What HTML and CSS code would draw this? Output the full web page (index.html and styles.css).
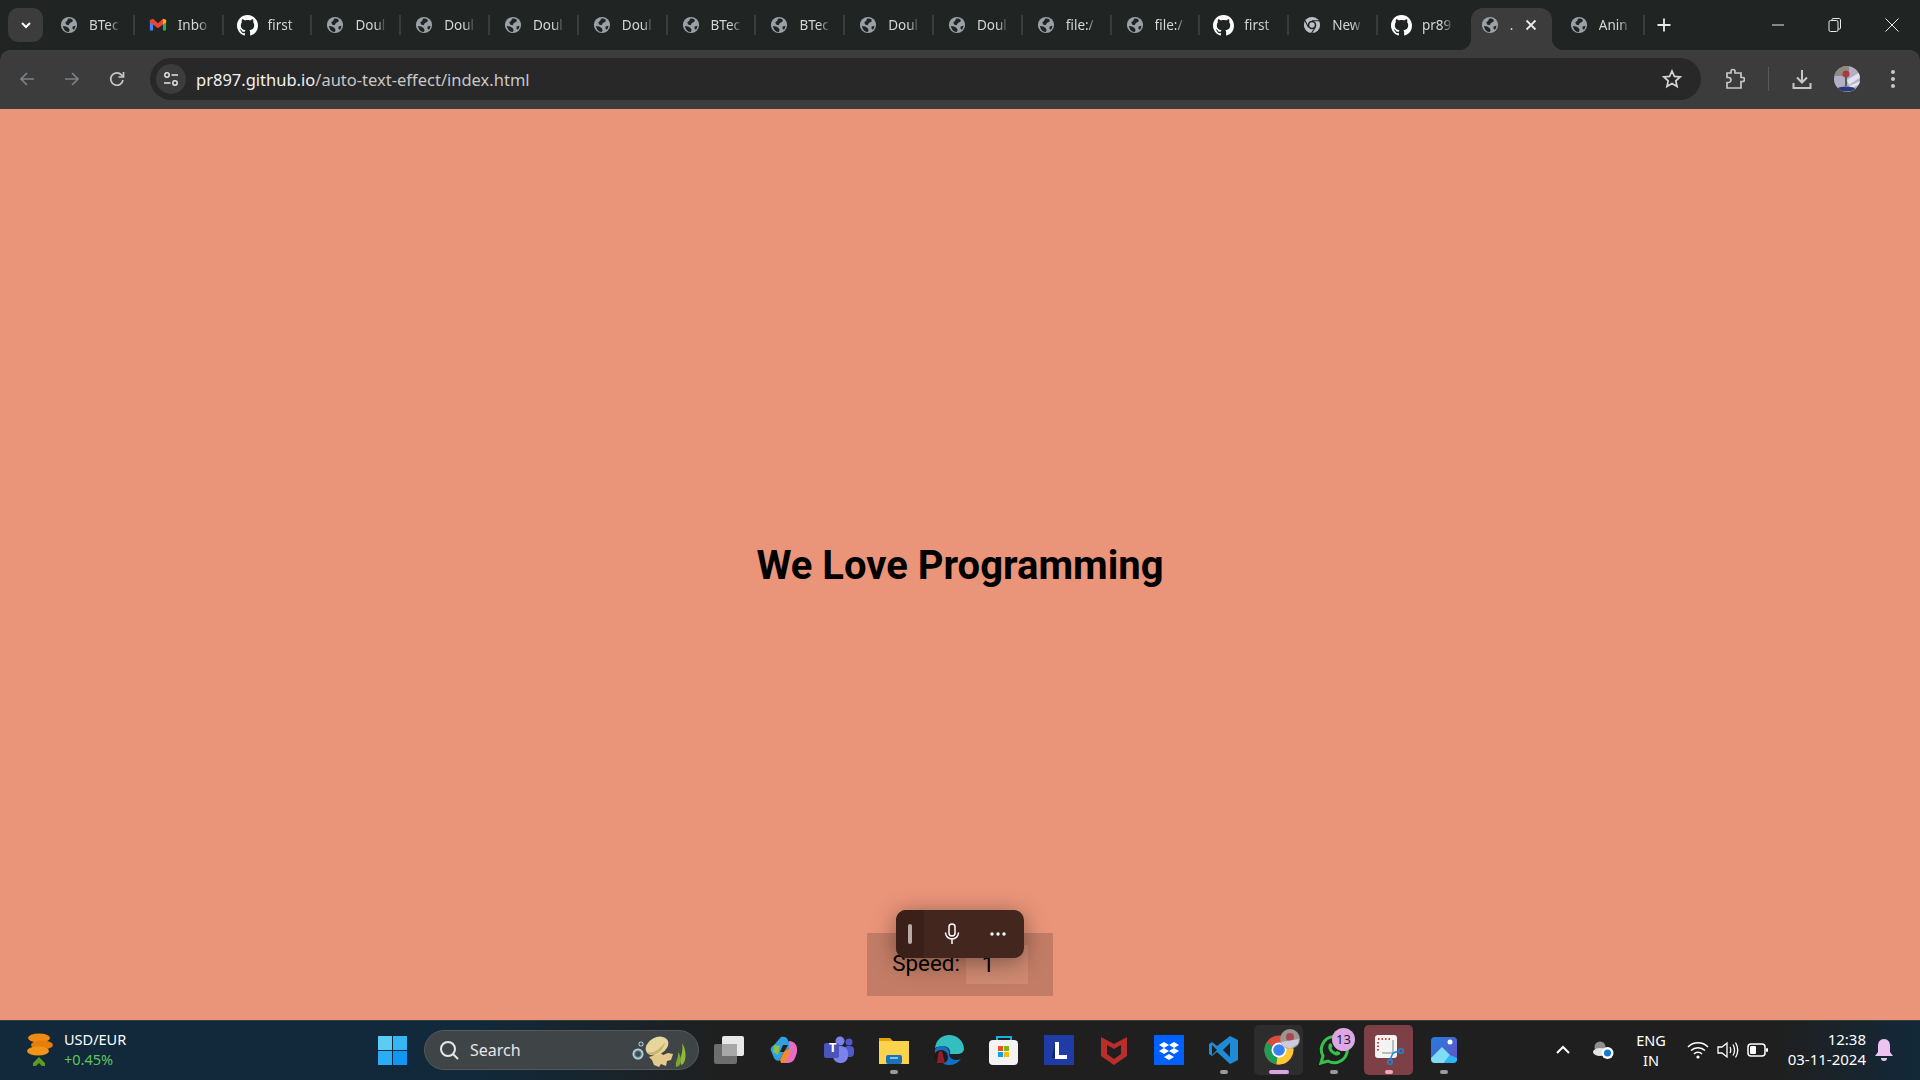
FILE: index.html
```html
<!DOCTYPE html>
<html lang="en">
<head>
  <meta charset="UTF-8" />
  <meta name="viewport" content="width=device-width, initial-scale=1.0"/>
  <title>Auto Text Effect</title>
  <link rel="stylesheet" href="styles.css">
</head>
<body>

  <svg class="defs" width="0" height="0">
    <symbol id="globe" viewBox="0 0 20 20">
      <circle cx="10" cy="10" r="9" fill="#9aa0a6"/>
      <path d="M9 3c2-.3 3.800.2 5.200 1.300l-.4 2.200-2.800 1.300-1.400 2.500-2.800-.9-.9-2.500 1.900-1.400z" fill="#202423"/>
      <path d="M3.200 11.200l3.800.4 2.800 1.900.9 2.400-1 1.900-2.200-.3C5.200 16.500 3.700 14 3.200 11.200z" fill="#202423"/>
      <path d="M14 11.800l3.100-1c0 1.800-.7 3.500-1.800 4.500l-1.500-1.300z" fill="#202423"/>
    </symbol>
    <symbol id="github" viewBox="0 0 16 16">
      <path fill="#fff" d="M8 0C3.580 0 0 3.580 0 8c0 3.540 2.290 6.530 5.470 7.590.4.070.55-.17.55-.38 0-.19-.01-.82-.01-1.490-2.010.37-2.530-.49-2.690-.94-.09-.23-.48-.94-.82-1.130-.28-.15-.68-.52-.01-.53.63-.01 1.080.58 1.230.82.72 1.210 1.870.87 2.330.66.07-.52.28-.87.51-1.070-1.780-.2-3.640-.89-3.640-3.950 0-.87.31-1.590.82-2.150-.08-.2-.36-1.020.08-2.120 0 0 .67-.21 2.200.82.64-.18 1.320-.27 2-.27.68 0 1.360.09 2 .27 1.530-1.040 2.200-.82 2.200-.82.44 1.100.16 1.920.08 2.120.51.56.82 1.270.82 2.150 0 3.070-1.870 3.750-3.650 3.950.29.25.54.73.54 1.480 0 1.070-.01 1.930-.01 2.200 0 .21.15.46.55.38A8.013 8.013 0 0016 8c0-4.420-3.580-8-8-8z"/>
    </symbol>
  </svg>

  <div class="tabstrip">
    <div class="tab-search">
      <svg width="12" height="12" viewBox="0 0 12 12"><path d="M2 4l4 4 4-4" fill="none" stroke="#fff" stroke-width="2"/></svg>
    </div>
    <div class="tabs">
      <div class="tab"><svg class="favicon"><use href="#globe"/></svg><span class="tab-title">BTec</span></div>
      <div class="tab">
        <svg class="favicon" viewBox="0 0 20 20">
          <path d="M1 4.500V16h3.500V8z" fill="#4285f4"/>
          <path d="M19 4.500V16h-3.500V8z" fill="#34a853"/>
          <path d="M1 4.500L4.500 3 10 8l5.500-5L19 4.500V7l-9 6.500L1 7z" fill="#ea4335"/>
          <path d="M15.500 3L19 4.500V7l-3.500 2.500z" fill="#fbbc04"/>
        </svg>
        <span class="tab-title">Inbo</span>
      </div>
      <div class="tab"><svg class="favicon big"><use href="#github"/></svg><span class="tab-title">first</span></div>
      <div class="tab"><svg class="favicon"><use href="#globe"/></svg><span class="tab-title">Doul</span></div>
      <div class="tab"><svg class="favicon"><use href="#globe"/></svg><span class="tab-title">Doul</span></div>
      <div class="tab"><svg class="favicon"><use href="#globe"/></svg><span class="tab-title">Doul</span></div>
      <div class="tab"><svg class="favicon"><use href="#globe"/></svg><span class="tab-title">Doul</span></div>
      <div class="tab"><svg class="favicon"><use href="#globe"/></svg><span class="tab-title">BTec</span></div>
      <div class="tab"><svg class="favicon"><use href="#globe"/></svg><span class="tab-title">BTec</span></div>
      <div class="tab"><svg class="favicon"><use href="#globe"/></svg><span class="tab-title">Doul</span></div>
      <div class="tab"><svg class="favicon"><use href="#globe"/></svg><span class="tab-title">Doul</span></div>
      <div class="tab"><svg class="favicon"><use href="#globe"/></svg><span class="tab-title">file:/</span></div>
      <div class="tab"><svg class="favicon"><use href="#globe"/></svg><span class="tab-title">file:/</span></div>
      <div class="tab"><svg class="favicon big"><use href="#github"/></svg><span class="tab-title">first</span></div>
      <div class="tab">
        <svg class="favicon" viewBox="0 0 20 20">
          <circle cx="10" cy="10" r="9" fill="#bdc1c6"/>
          <circle cx="10" cy="10" r="4.800" fill="#202423"/>
          <circle cx="10" cy="10" r="3" fill="#bdc1c6"/>
          <path d="M10 5.200h8M6 12.500L2.500 5.500M13.800 12.500L9.500 19" stroke="#202423" stroke-width="1.200"/>
        </svg>
        <span class="tab-title">New</span>
      </div>
      <div class="tab no-sep"><svg class="favicon big"><use href="#github"/></svg><span class="tab-title">pr89</span></div>
      <div class="tab active">
        <svg class="favicon"><use href="#globe"/></svg>
        <span class="tab-title">.</span>
        <svg class="tab-close" width="12" height="12" viewBox="0 0 12 12"><path d="M1.500 1.500l9 9M10.500 1.500l-9 9" stroke="#e8eaed" stroke-width="1.800"/></svg>
      </div>
      <div class="tab"><svg class="favicon"><use href="#globe"/></svg><span class="tab-title">Anin</span></div>
    </div>
    <svg class="new-tab" width="16" height="16" viewBox="0 0 16 16"><path d="M8 1.500v13M1.500 8h13" stroke="#e8eaed" stroke-width="1.800"/></svg>
    <div class="win-controls">
      <div class="win-btn"><svg width="14" height="14" viewBox="0 0 14 14"><path d="M1 7h12" stroke="#e8eaed"/></svg></div>
      <div class="win-btn"><svg width="14" height="16" viewBox="0 0 14 16"><rect x="1" y="3.500" width="9" height="11" rx="1.500" fill="none" stroke="#e8eaed"/><path d="M4 3.500V2.500C4 1.700 4.500 1.500 5 1.500h6c1 0 1.500.5 1.500 1.500v8c0 .6-.4 1-1 1H10" fill="none" stroke="#e8eaed"/></svg></div>
      <div class="win-btn"><svg width="14" height="14" viewBox="0 0 14 14"><path d="M.5.500l13 13M13.500.500l-13 13" stroke="#e8eaed"/></svg></div>
    </div>
  </div>

  <div class="toolbar">
    <div class="nav-btn"><svg width="18" height="18" viewBox="0 0 18 18"><path d="M16 9H3M9 3L3 9l6 6" fill="none" stroke="#7e8184" stroke-width="1.700"/></svg></div>
    <div class="nav-btn"><svg width="18" height="18" viewBox="0 0 18 18"><path d="M2 9h13M9 3l6 6-6 6" fill="none" stroke="#7e8184" stroke-width="1.700"/></svg></div>
    <div class="nav-btn"><svg width="18" height="18" viewBox="0 0 18 18"><path d="M15 10a6.200 6.200 0 1 1-1.600-5.200L15 6.500" fill="none" stroke="#c7c7c7" stroke-width="1.700"/><path d="M15.500 2v5h-5" fill="none" stroke="#c7c7c7" stroke-width="1.700"/></svg></div>
    <div class="omnibox">
      <div class="site-info">
        <svg width="18" height="18" viewBox="0 0 18 18"><circle cx="5" cy="5" r="2.200" fill="none" stroke="#e3e3e3" stroke-width="1.500"/><path d="M9.500 5H16M2 13h6.500" stroke="#e3e3e3" stroke-width="1.500"/><circle cx="13" cy="13" r="2.200" fill="none" stroke="#e3e3e3" stroke-width="1.500"/></svg>
      </div>
      <div class="url"><span class="url-host">pr897.github.io</span>/auto-text-effect/index.html</div>
      <svg class="star" width="20" height="20" viewBox="0 0 20 20"><path d="M10 2l2.400 5.400 5.800.6-4.400 3.900 1.300 5.700-5.100-3-5.100 3 1.300-5.700L1.800 8l5.800-.6z" fill="none" stroke="#d5d5d5" stroke-width="1.700"/></svg>
    </div>
    <div class="tool-btn ext">
      <svg width="20" height="22" viewBox="0 0 20 22"><path d="M2 5h4V3.500a2 2 0 0 1 4 0V5h6v4.500h1.500a2 2 0 0 1 0 4H16V20H2v-5.500h1.500a2.500 2.500 0 0 0 0-5H2z" fill="none" stroke="#c7c7c7" stroke-width="1.700"/></svg>
    </div>
    <div class="tool-sep"></div>
    <div class="tool-btn download">
      <svg width="20" height="22" viewBox="0 0 20 22"><path d="M10 2v12M5 9.500l5 5 5-5M1.500 15v5h17v-5" fill="none" stroke="#c7c7c7" stroke-width="2"/></svg>
    </div>
    <div class="tool-btn avatar">
      <svg width="26" height="26" viewBox="0 0 26 26">
        <defs><clipPath id="avatar-clip"><circle cx="13" cy="13" r="13"/></clipPath></defs>
        <g clip-path="url(#avatar-clip)">
          <rect width="26" height="26" fill="#b5aec6"/>
          <rect width="15" height="10" fill="#8f8a80"/>
          <path d="M13 14L28 5v5L15 19z" fill="#e5e1f2"/>
          <path d="M15 20l13-6v3l-12 6z" fill="#e5e1f2"/>
          <path d="M12 10v10" stroke="#3f6b48" stroke-width="2"/>
          <circle cx="12" cy="8" r="3.500" fill="#a83a40"/>
          <ellipse cx="12" cy="23" rx="9" ry="2.500" fill="#2d3a78"/>
        </g>
      </svg>
    </div>
    <div class="tool-btn menu">
      <svg width="6" height="20" viewBox="0 0 6 20"><circle cx="3" cy="3" r="2" fill="#c7c7c7"/><circle cx="3" cy="10" r="2" fill="#c7c7c7"/><circle cx="3" cy="17" r="2" fill="#c7c7c7"/></svg>
    </div>
  </div>

  <main class="page">
    <h1 class="headline">We Love Programming</h1>
    <div class="speed-box">
      <label for="speed">Speed:</label>
      <input type="text" id="speed" value="1" />
    </div>
    <div class="voice-bar">
      <div class="voice-handle"><span></span></div>
      <div class="voice-mic">
        <svg width="18" height="22" viewBox="0 0 18 22"><rect x="6" y="1" width="6" height="12" rx="3" fill="none" stroke="#fff" stroke-width="1.500"/><path d="M2.500 9.500a6.500 6.500 0 0 0 13 0M9 16v5" fill="none" stroke="#fff" stroke-width="1.500"/></svg>
      </div>
      <div class="voice-more">
        <svg width="16" height="4" viewBox="0 0 16 4"><circle cx="2" cy="2" r="1.700" fill="#fff"/><circle cx="8" cy="2" r="1.700" fill="#fff"/><circle cx="14" cy="2" r="1.700" fill="#fff"/></svg>
      </div>
    </div>
  </main>

  <footer class="taskbar">
    <div class="widget">
      <svg class="widget-icon" width="30" height="38" viewBox="0 0 30 38">
        <ellipse cx="15" cy="7" rx="11" ry="4.500" fill="#f08a12"/>
        <ellipse cx="18" cy="14" rx="11" ry="4.500" fill="#e67d0c"/>
        <ellipse cx="14" cy="20" rx="11" ry="4.500" fill="#f29417"/>
        <path d="M15 26l6 6v3h-3l-3-3-3 3H9v-3z" fill="#5b9c1f"/>
      </svg>
      <div class="widget-text">
        <div>USD/EUR</div>
        <div class="widget-change">+0.45%</div>
      </div>
    </div>
    <div class="start">
      <svg width="29" height="29" viewBox="0 0 29 29">
        <rect width="14" height="14" fill="#5ccbf5"/><rect x="15" width="14" height="14" fill="#35b5f4"/>
        <rect y="15" width="14" height="14" fill="#2bacf6"/><rect x="15" y="15" width="14" height="14" fill="#1296f3"/>
      </svg>
    </div>
    <div class="search">
      <svg width="22" height="22" viewBox="0 0 22 22"><circle cx="10" cy="10" r="7" fill="none" stroke="#e8e8e8" stroke-width="2"/><path d="M15 15l5 5" stroke="#e8e8e8" stroke-width="2"/></svg>
      <span class="search-text">Search</span>
      <svg class="search-art" width="58" height="40" viewBox="0 0 58 40">
        <defs><radialGradient id="bubble"><stop offset="0.4" stop-color="#3c4a50"/><stop offset="0.8" stop-color="#9cd6d8"/><stop offset="1" stop-color="#d9c4ee"/></radialGradient></defs>
        <circle cx="8" cy="24" r="5.500" fill="url(#bubble)"/>
        <circle cx="11" cy="14" r="2.500" fill="url(#bubble)"/>
        <path d="M33 25l5-2 5 1-2 6-4 1-1 5-5-2-2 3-5-2-2-5-3-3 6-2 3-4z" fill="#e3c98c"/>
        <ellipse cx="27" cy="16" rx="12" ry="8.500" transform="rotate(-28 27 16)" fill="#e6d69c"/>
        <path d="M17 22c5 2 13-2 18-10-1 7-6 12-12 13-3 0-5-1-6-3z" fill="#c9b46e"/>
        <path d="M46 37c-1-6 3-9 2-15 3 3 4 10 1 14z" fill="#7aa82e"/>
        <path d="M51 35c-2-8 3-12 1-22 4 6 5 16 1 21z" fill="#8fbb3a"/>
      </svg>
    </div>
    <div class="apps">
      <div class="app">
        <svg width="30" height="28" viewBox="0 0 30 28"><rect x="0" y="8" width="23" height="20" rx="2" fill="#6d6d6d"/><rect x="8" y="0" width="22" height="20" rx="2" fill="#e8e8e8"/><rect x="8" y="8" width="15" height="12" fill="#a8a8a8"/></svg>
      </div>
      <div class="app">
        <svg width="28" height="28" viewBox="0 0 28 28">
          <path d="M11 1c3-1 6 0 7 3l3 8-7 3-4 9c-2 2-5 0-6-2L1 15c-1-3 1-5 3-6z" fill="#2f9fe0"/>
          <path d="M4 9l6 1-2 9-5-3z" fill="#8bc34a"/>
          <path d="M19 5c3 0 5 1 7 4 2 4 1 9-1 13-1 3-4 5-8 5h-6c3 0 5-2 6-5l2-6z" fill="#e86bc4"/>
          <path d="M10 24l4-9 7-3-3 10c-1 3-3 5-7 5z" fill="#f28b30"/>
          <path d="M13 9h5l-4 7h-4z" fill="#1f1f1f"/>
        </svg>
      </div>
      <div class="app">
        <svg width="30" height="28" viewBox="0 0 30 28">
          <circle cx="25" cy="6" r="3.500" fill="#5059c9"/><rect x="20" y="10" width="10" height="11" rx="4" fill="#5059c9"/>
          <circle cx="16" cy="5" r="4.500" fill="#7b83eb"/><rect x="9" y="10" width="15" height="17" rx="7" fill="#7b83eb"/>
          <rect x="0" y="7" width="15" height="15" rx="2" fill="#4b53bc"/>
        </svg>
        <span class="teams-t">T</span>
      </div>
      <div class="app">
        <svg width="30" height="28" viewBox="0 0 30 28"><path d="M0 2h11l3 3h16v6H0z" fill="#e5a50a"/><rect y="5" width="30" height="23" fill="#fcd34d"/><rect x="7" y="19" width="16" height="9" rx="2" fill="#1a73b8"/><rect x="11" y="21" width="8" height="2" fill="#7cc4ee"/></svg>
        <span class="dot"></span>
      </div>
      <div class="app">
        <svg width="30" height="30" viewBox="0 0 30 30">
          <path d="M1 13C2 5 8 0 15 0c8 0 15 6 15 14 0 3-3 5-7 5h-7c1-4-2-8-7-8-3 0-6 1-8 2z" fill="#33bfc0"/>
          <path d="M1 14c3-3 8-4 11-2 3 2 4 5 3 8 2 5 6 6 12 4-3 4-7 6-12 6C7 30 0 23 1 14z" fill="#1170c4"/>
          <circle cx="7" cy="22" r="7" fill="#241517"/>
          <path d="M6 16c2 0 3 2 3 4l2 8H3l1-8c0-2 1-4 2-4z" fill="#8c2027"/>
        </svg>
      </div>
      <div class="app">
        <svg width="30" height="30" viewBox="0 0 30 30">
          <path d="M8 6V2h14v4" fill="none" stroke="#19b0e0" stroke-width="2"/>
          <rect y="5" width="29" height="25" rx="4" fill="#f4f4f4"/>
          <rect x="9" y="11" width="5" height="5" fill="#f25022"/><rect x="15" y="11" width="5" height="5" fill="#7fba00"/>
          <rect x="9" y="17" width="5" height="5" fill="#00a4ef"/><rect x="15" y="17" width="5" height="5" fill="#ffb900"/>
        </svg>
      </div>
      <div class="app">
        <svg width="30" height="30" viewBox="0 0 30 30"><rect width="30" height="30" fill="#1e3ba6"/><path d="M8 23L11 7v16z" fill="#0e2566"/><path d="M11 7h4v13h8v4H11z" fill="#fff"/></svg>
      </div>
      <div class="app">
        <svg width="26" height="30" viewBox="0 0 26 30"><path d="M0 2l13 7 13-7v19l-13 9-13-9z" fill="#b92d2a"/><path d="M6 10l7 4 7-4v9l-7 5-7-5z" fill="#1f1f1f"/></svg>
      </div>
      <div class="app">
        <svg width="30" height="30" viewBox="0 0 30 30">
          <rect width="30" height="30" fill="#0061fe"/>
          <path d="M10 7l5 3-5 3-5-3zM20 7l5 3-5 3-5-3zM10 13l5 3-5 3-5-3zM20 13l5 3-5 3-5-3zM15 19l5 3-5 3-5-3z" fill="#fff"/>
        </svg>
      </div>
      <div class="app">
        <svg width="30" height="30" viewBox="0 0 30 30">
          <path d="M21 1l8 4v20l-8 4-13-12-5 4-3-2v-10l3-2 5 4z" fill="#1f8ad6"/>
          <path d="M21 8l-7 7 7 7z" fill="#1f1f1f"/>
          <path d="M3 10l5 5-5 5z" fill="#1f1f1f"/>
        </svg>
        <span class="dot"></span>
      </div>
      <div class="app app-open">
        <svg width="30" height="30" viewBox="0 0 30 30">
          <circle cx="15" cy="15" r="14.500" fill="#dd4b3e"/>
          <path d="M15 15L2.500 7.500A14.500 14.500 0 0 0 12.500 29.300z" fill="#1f9d55"/>
          <path d="M15 8h12.500A14.500 14.500 0 0 1 12.500 29.300z" fill="#fcc934"/>
          <circle cx="15" cy="15" r="7.500" fill="#fff"/>
          <circle cx="15" cy="15" r="5.800" fill="#3b82f0"/>
        </svg>
        <svg class="chrome-badge" width="20" height="20" viewBox="0 0 20 20"><circle cx="10" cy="10" r="10" fill="#9b9490"/><circle cx="10" cy="8" r="4" fill="#a8484e"/><path d="M1 13l18-3-1 5-8 5-7-3z" fill="#cfcbdc"/></svg>
        <span class="dot dot-wide"></span>
      </div>
      <div class="app">
        <svg width="30" height="30" viewBox="0 0 30 30">
          <path d="M2 28l2-7A13 13 0 1 1 9 26z" fill="none" stroke="#35c24c" stroke-width="3"/>
          <path d="M10 9c1-1 2-1 2.500 0l1 2.500-1 1.500c1 2 2 3 4 4l1.500-1 2.500 1c1 .5 1 1.500 0 2.500-2 2-5 1-8-1.500-3-2.500-4-6-2.500-9z" fill="#35c24c"/>
        </svg>
        <span class="count-badge">13</span>
        <span class="dot"></span>
      </div>
      <div class="app app-active">
        <svg width="30" height="30" viewBox="0 0 30 30">
          <rect x="1" y="0" width="22" height="23" rx="3" fill="#f4f4f4"/>
          <path d="M4 4h1.500M7.500 4H9M11 4h1.500M14.500 4H16M4 7v1.500M4 10.500V12M4 14v1.500" stroke="#d9402f" stroke-width="2"/>
          <path d="M8 18h11V5" fill="none" stroke="#a9a9a9" stroke-width="1.500"/>
          <path d="M19 18l-3 7M19 18l6-2" stroke="#1a8ad8" stroke-width="1.500"/>
          <circle cx="16" cy="27" r="2.300" fill="none" stroke="#1a8ad8" stroke-width="1.500"/>
          <circle cx="27" cy="16" r="2.300" fill="none" stroke="#1a8ad8" stroke-width="1.500"/>
        </svg>
        <span class="dot dot-pink"></span>
      </div>
      <div class="app">
        <svg width="26" height="26" viewBox="0 0 26 26">
          <defs><linearGradient id="photos-bg" x1="0" y1="0" x2="1" y2="1"><stop offset="0" stop-color="#1f7fe0"/><stop offset="1" stop-color="#6a4fc0"/></linearGradient></defs>
          <rect width="26" height="26" rx="4" fill="url(#photos-bg)"/>
          <circle cx="19" cy="5" r="2.500" fill="#fff"/>
          <path d="M0 21l11-11 8 8-6 8H4a4 4 0 0 1-4-4z" fill="#7fdcf7"/>
          <path d="M13 26l6-8 7 3v1a4 4 0 0 1-4 4z" fill="#2bb5f2"/>
        </svg>
        <span class="dot"></span>
      </div>
    </div>
    <div class="tray">
      <div class="tray-item tray-chevron"><svg width="14" height="10" viewBox="0 0 14 10"><path d="M1 8l6-6 6 6" fill="none" stroke="#fff" stroke-width="2"/></svg></div>
      <div class="tray-item tray-cloud">
        <svg width="22" height="20" viewBox="0 0 22 20"><circle cx="8" cy="7" r="5.500" fill="#8f8f8f"/><ellipse cx="8" cy="12" rx="7" ry="4" fill="#e4e4e4"/><circle cx="15.500" cy="13" r="6" fill="#fff"/><circle cx="15.500" cy="13" r="3.500" fill="#1479d4"/></svg>
      </div>
      <div class="tray-lang"><div>ENG</div><div>IN</div></div>
      <div class="tray-item tray-wifi">
        <svg width="22" height="20" viewBox="0 0 22 20"><path d="M1 7a14 14 0 0 1 20 0M4 10.500a10 10 0 0 1 14 0M7 14a5.500 5.500 0 0 1 8 0" fill="none" stroke="#fff" stroke-width="1.500"/><circle cx="11" cy="17" r="1.600" fill="#fff"/></svg>
      </div>
      <div class="tray-item tray-volume">
        <svg width="22" height="20" viewBox="0 0 22 20"><path d="M1 7v6h4l5 4V3L5 7z" fill="none" stroke="#fff" stroke-width="1.300"/><path d="M13 7c1 2 1 4 0 6M16 4.500c2 3.500 2 7.500 0 11M18.500 2.500c3 5 3 10 0 15" fill="none" stroke="#fff" stroke-width="1.300"/></svg>
      </div>
      <div class="tray-item tray-battery">
        <svg width="22" height="14" viewBox="0 0 22 14"><rect x="1" y="1" width="17" height="12" rx="3" fill="none" stroke="#fff" stroke-width="1.500"/><rect x="3" y="3" width="6" height="8" rx="1" fill="#fff"/><rect x="19" y="5" width="2" height="4" rx="1" fill="#fff"/></svg>
      </div>
      <div class="clock"><div>12:38</div><div>03-11-2024</div></div>
      <div class="tray-item tray-bell">
        <svg width="18" height="24" viewBox="0 0 18 24"><path d="M9 1c4 0 6 3 6 7v6l3 4H0l3-4V8c0-4 2-7 6-7z" fill="#eec3f2"/><path d="M6 20h6c0 2-1 3-3 3s-3-1-3-3z" fill="#eec3f2"/></svg>
      </div>
    </div>
  </footer>

</body>
</html>
```

FILE: styles.css
```css
* {
  box-sizing: border-box;
}
html, body {
  margin: 0;
  height: 100%;
}
body {
  display: flex;
  flex-direction: column;
  height: 1080px;
  overflow: hidden;
  font-family: 'Noto Sans', sans-serif;
  background: #202423;
}
.defs {
  position: absolute;
}

/* tab strip */
.tabstrip {
  display: flex;
  align-items: center;
  height: 50px;
  flex: none;
  background: #202423;
}
.tab-search {
  display: flex;
  align-items: center;
  justify-content: center;
  width: 35px;
  height: 34px;
  margin-left: 8px;
  margin-right: 3px;
  background: #3c3c3c;
  border-radius: 10px;
}
.tabs {
  display: flex;
  height: 50px;
}
.tab {
  position: relative;
  display: flex;
  align-items: center;
  width: 88.8px;
  height: 50px;
  padding-left: 14px;
  color: #d4d6d6;
  font-size: 13.5px;
}
.tab::after {
  content: "";
  position: absolute;
  right: 0;
  top: 15px;
  width: 2px;
  height: 20px;
  background: #3a3d3d;
}
.tab.no-sep::after {
  display: none;
}
.favicon {
  width: 18px;
  height: 18px;
  flex: none;
}
.favicon.big {
  width: 21px;
  height: 21px;
  margin-left: -1px;
  margin-right: -1px;
}
.tab-title {
  width: 34px;
  margin-left: 11px;
  white-space: nowrap;
  -webkit-mask-image: linear-gradient(to right, #000 60%, transparent 94%);
  mask-image: linear-gradient(to right, #000 60%, transparent 94%);
}
.tab.active {
  width: 81px;
  margin: 8px 4px 0 4px;
  height: 42px;
  padding-left: 10px;
  padding-bottom: 8px;
  background: #3c3c3c;
  border-radius: 12px 12px 0 0;
}
.tab.active::before,
.tab.active::after {
  content: "";
  position: absolute;
  top: auto;
  bottom: 0;
  width: 12px;
  height: 12px;
}
.tab.active::before {
  left: -12px;
  background: radial-gradient(circle at 0 0, transparent 12px, #3c3c3c 12.5px);
}
.tab.active::after {
  right: -12px;
  background: radial-gradient(circle at 100% 0, transparent 12px, #3c3c3c 12.5px);
}
.tab.active .tab-title {
  width: 14px;
}
.tab-close {
  margin-left: 1px;
}
.new-tab {
  margin-left: 11px;
}
.win-controls {
  display: flex;
  margin-left: auto;
}
.win-btn {
  display: flex;
  align-items: center;
  justify-content: center;
  width: 57px;
  height: 50px;
}

/* address bar row */
.toolbar {
  display: flex;
  align-items: center;
  height: 59px;
  flex: none;
  padding-left: 9px;
  padding-bottom: 1px;
  background: #3c3c3c;
  border-radius: 10px 10px 0 0;
}
.nav-btn {
  display: flex;
  align-items: center;
  justify-content: center;
  width: 36px;
  height: 36px;
  margin-right: 9px;
}
.omnibox {
  display: flex;
  align-items: center;
  width: 1551px;
  height: 42px;
  margin-left: 6px;
  padding: 0 19px 0 6px;
  background: #282828;
  border-radius: 21px;
}
.site-info {
  display: flex;
  align-items: center;
  justify-content: center;
  width: 30px;
  height: 30px;
  background: #3c3c3c;
  border-radius: 50%;
}
.url {
  margin-left: 10px;
  color: #c7c7c7;
  font-size: 16.5px;
  white-space: nowrap;
}
.url-host {
  color: #f1f1f1;
}
.star {
  margin-left: auto;
}
.tool-btn {
  display: flex;
  align-items: center;
  justify-content: center;
}
.ext {
  width: 36px;
  margin-left: 16px;
}
.tool-sep {
  width: 1px;
  height: 24px;
  margin-left: 15px;
  background: #5a5a5a;
}
.download {
  width: 36px;
  margin-left: 15px;
}
.avatar {
  width: 30px;
  margin-left: 12px;
}
.menu {
  width: 20px;
  margin-left: 21px;
}

/* page content */
.page {
  position: relative;
  flex: 1;
  display: grid;
  grid-template-rows: 1fr auto 1fr;
  justify-items: center;
  background: #ea957a;
}
.headline {
  grid-row: 2;
  margin: 2px 0 0;
  color: #000;
  font-family: Roboto, sans-serif;
  font-size: 40px;
  font-weight: 700;
}
.speed-box {
  grid-row: 3;
  align-self: end;
  display: flex;
  align-items: center;
  gap: 6px;
  margin-bottom: 24px;
  padding: 12px 25px 12px 25px;
  background: rgba(60, 40, 30, 0.22);
  color: #000;
  font-family: Roboto, sans-serif;
  font-size: 22.4px;
  line-height: 36px;
}
.speed-box label {
  margin-top: -4px;
}
.speed-box input {
  width: 62px;
  height: 39px;
  padding: 0 0 2px 16px;
  border: none;
  background: #cf8a72;
  color: #000;
  font-family: Roboto, sans-serif;
  font-size: 22.4px;
}
.voice-bar {
  position: absolute;
  left: 896px;
  bottom: 62px;
  display: flex;
  width: 128px;
  height: 48px;
  overflow: hidden;
  background: #43271e;
  border-radius: 10px;
  box-shadow: 0 4px 24px rgba(0, 0, 0, 0.4);
}
.voice-handle {
  display: flex;
  align-items: center;
  justify-content: center;
  width: 28px;
  background: #3a2018;
}
.voice-handle span {
  width: 4px;
  height: 20px;
  background: #b9aaa5;
  border-radius: 2px;
}
.voice-mic {
  display: flex;
  align-items: center;
  justify-content: center;
  width: 56px;
}
.voice-more {
  display: flex;
  align-items: center;
  justify-content: center;
  width: 36px;
}

/* windows taskbar */
.taskbar {
  display: flex;
  align-items: center;
  height: 60px;
  flex: none;
  box-shadow: inset 0 1px #3a3a3a;
  background: linear-gradient(to right, #11293a 0, #11293a 480px, #1f1f1f 720px, #1f1f1f 1780px, #12293a 1920px);
  color: #fff;
}
.widget {
  display: flex;
  align-items: center;
  width: 364px;
  padding-left: 24px;
  font-size: 14.5px;
  line-height: 20px;
}
.widget-text {
  margin-left: 10px;
  margin-top: -2px;
}
.widget-change {
  color: #62c45b;
}
.start {
  display: flex;
  justify-content: center;
  width: 56px;
}
.search {
  display: flex;
  align-items: center;
  width: 275px;
  height: 40px;
  margin-left: 4px;
  padding-left: 13px;
  background: #3f4447;
  border: 1px solid #54585b;
  border-radius: 20px;
}
.search-text {
  margin-left: 10px;
  color: #e6e6e6;
  font-size: 16px;
}
.search-art {
  margin-left: auto;
  margin-right: 10px;
}
.apps {
  display: flex;
  margin-left: 2px;
}
.app {
  position: relative;
  display: flex;
  align-items: center;
  justify-content: center;
  width: 49px;
  height: 50px;
  margin: 0 3px;
  border-radius: 5px;
}
.app-open {
  background: #2d2d2d;
}
.app-active {
  background: #7d4046;
}
.dot {
  position: absolute;
  left: 50%;
  bottom: 1px;
  width: 8px;
  height: 4px;
  margin-left: -4px;
  background: #9a9a9a;
  border-radius: 2px;
}
.dot-wide {
  width: 20px;
  margin-left: -10px;
  background: #dba6e3;
}
.dot-pink {
  background: #f3a6b5;
}
.teams-t {
  position: absolute;
  left: 15px;
  top: 13px;
  color: #fff;
  font-size: 13px;
  font-weight: 700;
}
.chrome-badge {
  position: absolute;
  top: 4px;
  right: 3px;
}
.count-badge {
  position: absolute;
  top: 3px;
  right: 3px;
  width: 23px;
  height: 23px;
  background: #dfa6e5;
  border-radius: 50%;
  color: #1f1f1f;
  font-size: 13px;
  line-height: 23px;
  text-align: center;
}
.tray {
  display: flex;
  align-items: center;
  margin-left: auto;
  padding-right: 18px;
}
.tray-item {
  display: flex;
  align-items: center;
  justify-content: center;
}
.tray-chevron {
  width: 36px;
}
.tray-cloud {
  width: 44px;
}
.tray-lang {
  width: 52px;
  margin-right: 3px;
  font-size: 14.5px;
  line-height: 20px;
  text-align: center;
}
.tray-wifi {
  width: 36px;
}
.tray-volume {
  width: 24px;
}
.tray-battery {
  width: 36px;
}
.clock {
  width: 90px;
  margin-top: -2px;
  font-size: 15px;
  line-height: 20px;
  text-align: right;
}
.tray-bell {
  width: 36px;
}
```
